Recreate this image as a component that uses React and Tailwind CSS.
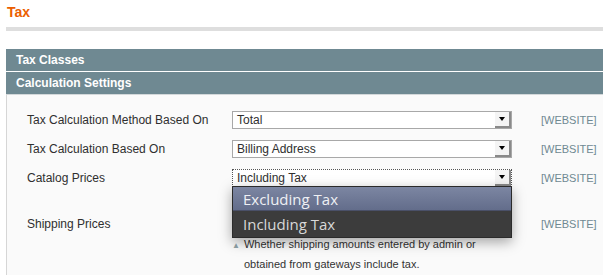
const rows = [
  { label: "Tax Calculation Method Based On", value: "Total" },
  { label: "Tax Calculation Based On", value: "Billing Address" },
];

function Arrow() {
  return (
    <span className="absolute right-0 top-0 flex h-full w-[16px] items-center justify-center border-r-2 border-b-2 border-[#8a8a8a] bg-[#f4f4f4]">
      <span className="block h-0 w-0 border-x-[3.5px] border-t-[4px] border-x-transparent border-t-black" />
    </span>
  );
}

function Select({ value, focused }) {
  return (
    <div
      className={
        "relative h-[18px] w-[280px] bg-white pl-[4px] text-[12px] leading-[16px] text-[#2f2f2f] " +
        (focused ? "border border-dotted border-[#555]" : "border border-[#a8a8a8]")
      }
    >
      {value}
      <Arrow />
    </div>
  );
}

function Scope() {
  return <span className="ml-[29px] text-[11px] text-[#6f8992]">[WEBSITE]</span>;
}

export default function App() {
  return (
    <div className="h-[275px] w-[603px] overflow-hidden bg-white font-['Liberation_Sans',Arial,sans-serif]">
      <div className="pl-[6px]">
        <h3 className="h-[27px] pl-[1px] pt-[4px] text-[14px] font-bold leading-[17px] text-[#eb5e00]">
          Tax
        </h3>
        <div className="h-[4px] bg-[#dedede]" />
        <div className="h-[18px]" />

        <div className="h-[22px] bg-[#6f8992] pl-[10px] text-[12px] font-bold leading-[22px] text-white">
          Tax Classes
        </div>
        <div className="h-px bg-white" />
        <div className="h-[22px] bg-[#6f8992] pl-[10px] text-[12px] font-bold leading-[22px] text-white">
          Calculation Settings
        </div>
        <div className="h-px bg-[#d3d8da]" />

        <div className="h-[200px] border-l border-[#d6d6d6] bg-[#fafafa] pl-[20px] pt-[16px] text-[12px] text-[#2f2f2f]">
          {rows.map((r) => (
            <div key={r.label} className="mb-[11px] flex h-[18px] items-center">
              <span className="w-[205px]">{r.label}</span>
              <Select value={r.value} />
              <Scope />
            </div>
          ))}

          <div className="flex h-[18px] items-center">
            <span className="w-[205px]">Catalog Prices</span>
            <div className="relative z-10">
              <Select value="Including Tax" focused />
              <div className="absolute left-0 top-[17px] w-[280px] border border-[#2b2b2b] bg-[#3c3c3c] font-['Open_Sans',sans-serif] text-[15px] shadow-[0_4px_12px_rgba(0,0,0,0.35)]">
                <div className="h-[24px] border-b border-[#4a5068] bg-gradient-to-b from-[#7c86a2] to-[#636d8b] pl-[10px] leading-[24px] text-[#eef0f4]">
                  Excluding Tax
                </div>
                <div className="h-[26px] pl-[10px] leading-[26px] text-[#d8d8d8]">
                  Including Tax
                </div>
              </div>
            </div>
            <Scope />
          </div>

          <div className="mt-[28px] flex">
            <span className="w-[205px] leading-[18px]">Shipping Prices</span>
            <div className="w-[280px]">
              {/* hidden beneath the open dropdown */}
              <Select value="" />
              <div className="mt-[2px] text-[11px] leading-[18px] text-[#333]">
                <span className="mr-[4px] text-[8px] text-[#8fa3a8]">▲</span>
                Whether shipping amounts entered by admin or
                <br />
                <span className="pl-[12px]">obtained from gateways include tax.</span>
              </div>
            </div>
            <span className="leading-[18px]">
              <Scope />
            </span>
          </div>
        </div>
      </div>
    </div>
  );
}
